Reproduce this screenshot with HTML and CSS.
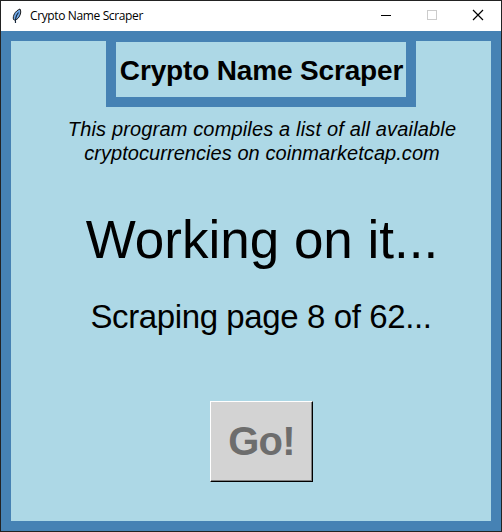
FILE: index.html
```html
<!DOCTYPE html>
<html lang="en"><head><meta charset="utf-8"><title>Crypto Name Scraper</title><link rel="stylesheet" href="styles.css"></head>
<body><div class="window">
<header class="titlebar">
<svg class="feather" width="16" height="16" viewBox="0 0 16 16"><path d="M4.500 11.500C3.500 8 6 3 11 1c1.500 2.500.5 5.500-1 8-1.200 2-3 3-4.500 3z" fill="#70a8e8" stroke="#1a1a1a"/><path d="M6.500 15C6 11 7.500 7 9.500 4.500" fill="none" stroke="#16283c" stroke-width="1.200"/></svg>
<span class="title">Crypto Name Scraper</span>
<svg class="control" width="46" height="30" viewBox="0 0 46 30"><path d="M18 14.500h10" stroke="#000"/></svg>
<svg class="control" width="46" height="30" viewBox="0 0 46 30"><rect x="18.500" y="9.500" width="9" height="9" fill="none" stroke="#ccc"/></svg>
<svg class="control" width="46" height="30" viewBox="0 0 46 30"><path d="M18 9l10 10M28 9l-10 10" stroke="#000" stroke-width="1.200"/></svg>
</header>
<main class="panel">
<h1 class="heading">Crypto Name Scraper</h1>
<p class="intro"><span class="intro-first">This program compiles a list of all available</span><br>cryptocurrencies on coinmarketcap.com</p>
<p class="status">Working on it...</p>
<p class="progress">Scraping page 8 of 62...</p>
<button class="go" disabled>Go!</button>
</main></div></body></html>
```
FILE: styles.css
```css
* { box-sizing: border-box; }
body { margin: 0; background: #222; font-family: "Liberation Sans", Arial, sans-serif; color: #000; }
.window { width: 502px; height: 532px; padding: 1px; display: flex; flex-direction: column; }
.titlebar { height: 30px; background: #fff; display: flex; align-items: center; padding-left: 8px; flex: none; }
.title { flex: 1; margin-left: 5px; padding-bottom: 1px; font: 12px "Open Sans", sans-serif; letter-spacing: -.37px; white-space: nowrap; }
.control { flex: none; }
.panel { flex: 1; padding-left: 20px; background: #add8e6; border: 10px solid #4682b4; display: flex; flex-direction: column; align-items: center; }
.heading { margin: -9px 0 0; width: 310px; height: 75px; padding-left: 1px; border: 10px solid #4682b4; font-size: 28px; line-height: 57px; letter-spacing: -.16px; text-align: center; white-space: nowrap; }
.intro { margin: 10px 0 0; padding-left: 2px; font-size: 20px; line-height: 24px; letter-spacing: .06px; font-style: italic; text-align: center; white-space: nowrap; }
.intro-first { letter-spacing: .16px; }
.status { margin: 44px 0 0; padding-left: 2px; font-size: 53px; line-height: 62px; white-space: nowrap; }
.progress { margin: 27px 0 0; font-size: 33px; line-height: 38px; letter-spacing: -.39px; white-space: nowrap; }
.go { margin: 65px 0 0; width: 103px; height: 81px; padding: 0 0 0 1px; border: 1px solid; border-color: #fff #000 #000 #fff; box-shadow: inset -1px -1px #808080; background: #d3d3d3; color: #6d6d6d; font: bold 40px "Liberation Sans", Arial, sans-serif; letter-spacing: -.8px; }
```
